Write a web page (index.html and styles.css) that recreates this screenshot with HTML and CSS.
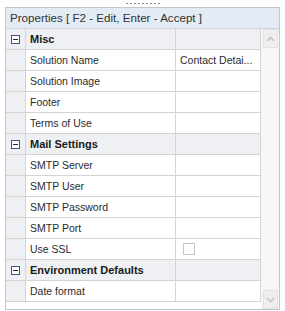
FILE: index.html
```html
<!DOCTYPE html>
<html lang="en">

<head>
    <meta charset="UTF-8">
    <meta name="viewport" content="width=device-width, initial-scale=1.0">
    <title>Properties</title>
    <link rel="stylesheet" href="styles.css">
</head>

<body>
    <div class="grip"><span class="grip-line"></span></div>
    <div class="panel">
        <div class="panel-title">Properties [ F2 - Edit, Enter - Accept ]</div>
        <div class="panel-body">
            <div class="grid">
                <div class="row category">
                    <div class="gutter"><span class="expander"></span></div>
                    <div class="name">Misc</div>
                    <div class="value"></div>
                </div>
                <div class="row">
                    <div class="gutter"></div>
                    <div class="name">Solution Name</div>
                    <div class="value">Contact Detai...</div>
                </div>
                <div class="row">
                    <div class="gutter"></div>
                    <div class="name">Solution Image</div>
                    <div class="value"></div>
                </div>
                <div class="row">
                    <div class="gutter"></div>
                    <div class="name">Footer</div>
                    <div class="value"></div>
                </div>
                <div class="row">
                    <div class="gutter"></div>
                    <div class="name">Terms of Use</div>
                    <div class="value"></div>
                </div>
                <div class="row category">
                    <div class="gutter"><span class="expander"></span></div>
                    <div class="name">Mail Settings</div>
                    <div class="value"></div>
                </div>
                <div class="row">
                    <div class="gutter"></div>
                    <div class="name">SMTP Server</div>
                    <div class="value"></div>
                </div>
                <div class="row">
                    <div class="gutter"></div>
                    <div class="name">SMTP User</div>
                    <div class="value"></div>
                </div>
                <div class="row">
                    <div class="gutter"></div>
                    <div class="name">SMTP Password</div>
                    <div class="value"></div>
                </div>
                <div class="row">
                    <div class="gutter"></div>
                    <div class="name">SMTP Port</div>
                    <div class="value"></div>
                </div>
                <div class="row">
                    <div class="gutter"></div>
                    <div class="name">Use SSL</div>
                    <div class="value"><span class="checkbox"></span></div>
                </div>
                <div class="row category">
                    <div class="gutter"><span class="expander"></span></div>
                    <div class="name">Environment Defaults</div>
                    <div class="value"></div>
                </div>
                <div class="row">
                    <div class="gutter"></div>
                    <div class="name">Date format</div>
                    <div class="value"></div>
                </div>
            </div>
            <div class="scrollbar">
                <div class="scroll-btn">
                    <svg width="9" height="6" viewBox="0 0 9 6"><path d="M1 5 L4.5 1.5 L8 5" fill="none" stroke="#c4c4c4" stroke-width="1.6"/></svg>
                </div>
                <div class="scroll-track"></div>
                <div class="scroll-btn">
                    <svg width="9" height="6" viewBox="0 0 9 6"><path d="M1 1 L4.5 4.5 L8 1" fill="none" stroke="#c4c4c4" stroke-width="1.6"/></svg>
                </div>
            </div>
        </div>
    </div>
</body>

</html>
```

FILE: styles.css
```css
body {
    margin: 0;
    background-color: #ffffff;
    font-family: "Liberation Sans", Arial, sans-serif;
    color: #2b2b2b;
}

.grip {
    height: 7px;
    display: flex;
    justify-content: center;
    align-items: flex-start;
}

.grip-line {
    width: 35px;
    height: 1px;
    margin-top: 3px;
    margin-left: 1px;
    background: repeating-linear-gradient(to right, #8c8c8c 0, #8c8c8c 2px, transparent 2px, transparent 4px);
}

.panel {
    margin: 0 5px;
    height: 303px;
    box-sizing: border-box;
    border: 1px solid #c6c6c6;
    display: flex;
    flex-direction: column;
}

.panel-title {
    height: 21px;
    box-sizing: border-box;
    padding-left: 4px;
    line-height: 20px;
    font-size: 11.6px;
    color: #333333;
    background-color: #e3ecf5;
    border-bottom: 1px solid #cdd5de;
}

.panel-body {
    flex: 1;
    display: flex;
}

.grid {
    width: 255px;
    display: flex;
    flex-direction: column;
}

.row {
    display: grid;
    grid-template-columns: 20px 150px 1fr;
    height: 21px;
    box-sizing: border-box;
    border-bottom: 1px solid #d4d4d4;
    font-size: 10.5px;
}

.row > div {
    border-right: 1px solid #d4d4d4;
    box-sizing: border-box;
    display: flex;
    align-items: center;
    overflow: hidden;
}

.gutter {
    background-color: #eef0f3;
    justify-content: center;
}

.name {
    padding-left: 4px;
    white-space: nowrap;
}

.value {
    padding: 0 2px 0 4px;
    white-space: nowrap;
}

.row .value {
    display: block;
    line-height: 20px;
    text-overflow: ellipsis;
}

.category > div {
    background-color: #eef0f3;
}

.category .name {
    font-weight: bold;
    font-size: 11px;
    color: #1a1a1a;
}

.expander {
    width: 9px;
    height: 9px;
    box-sizing: border-box;
    border: 1px solid #3e5573;
    background-color: #ffffff;
    position: relative;
    margin-left: -1px;
}

.expander::after {
    content: "";
    position: absolute;
    left: 1px;
    top: 3px;
    width: 5px;
    height: 1px;
    background-color: #1e2c40;
}

.checkbox {
    display: inline-block;
    width: 12px;
    height: 12px;
    margin: 4px 0 0 3px;
    box-sizing: border-box;
    border: 1px solid #c4c4c4;
    vertical-align: top;
}

.scrollbar {
    flex: 1;
    display: flex;
    flex-direction: column;
    background-color: #f7f7f7;
    padding: 0 1px 0 2px;
}

.scroll-btn {
    height: 19px;
    display: flex;
    justify-content: center;
    align-items: center;
    background-color: #eeeeee;
    border: 1px solid #e2e2e2;
    box-sizing: border-box;
}

.scroll-track {
    flex: 1;
}
```
